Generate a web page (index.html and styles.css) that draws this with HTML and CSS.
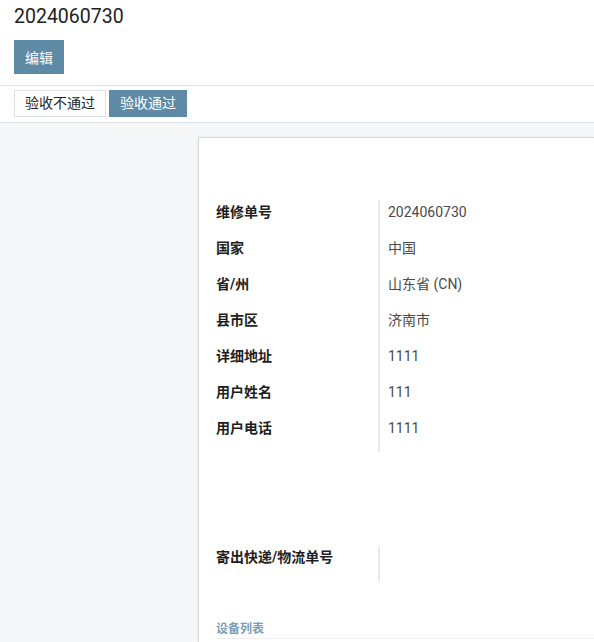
FILE: index.html
```html
<!DOCTYPE html>
<html lang="zh">
<head>
<meta charset="utf-8">
<link rel="stylesheet" href="styles.css">
</head>
<body>
<div class="header">
  <h1 class="title">2024060730</h1>
  <button class="btn btn-primary btn-edit">编辑</button>
</div>
<div class="statusbar">
  <button class="btn btn-light">验收不通过</button>
  <button class="btn btn-primary">验收通过</button>
</div>
<div class="sheet-bg">
  <div class="sheet">
    <div class="group">
      <div class="label">维修单号</div><div class="value">2024060730</div>
      <div class="label">国家</div><div class="value">中国</div>
      <div class="label">省/州</div><div class="value">山东省 (CN)</div>
      <div class="label">县市区</div><div class="value">济南市</div>
      <div class="label">详细地址</div><div class="value">1111</div>
      <div class="label">用户姓名</div><div class="value">111</div>
      <div class="label">用户电话</div><div class="value">1111</div>
    </div>
    <div class="group group-ship">
      <div class="label">寄出快递/物流单号</div><div class="value"></div>
    </div>
    <div class="section-title">设备列表</div>
  </div>
</div>
</body>
</html>
```
FILE: styles.css
```css
* {
  box-sizing: border-box;
}
html, body {
  margin: 0;
  padding: 0;
  background: #fff;
  font-family: Roboto, "Noto Sans CJK SC", sans-serif;
  color: #212529;
  overflow: hidden;
  width: 594px;
  height: 642px;
}
.header {
  padding: 0 14px 11px;
  border-bottom: 1px solid #dfe2e6;
  height: 86px;
}
.title {
  margin: 0;
  font-size: 19.5px;
  font-weight: 400;
  line-height: 34px;
  height: 40px;
  color: #222;
}
.btn {
  font-family: Roboto, "Noto Sans CJK SC", sans-serif;
  font-size: 14px;
  border: 1px solid transparent;
  border-radius: 0;
  cursor: pointer;
  margin: 0;
}
.btn-primary {
  background: #5e8aa6;
  border-color: #5e8aa6;
  color: #fff;
}
.btn-edit {
  height: 34px;
  width: 50px;
  padding: 0;
  display: block;
}
.statusbar {
  display: flex;
  gap: 3px;
  padding: 4px 14px;
  height: 37px;
  border-bottom: 1px solid #dfe2e6;
}
.statusbar .btn {
  height: 27px;
  padding: 0 10px;
  line-height: 25px;
}
.btn-light {
  background: #fff;
  border-color: #dee2e6;
  color: #212529;
}
.sheet-bg {
  background: #f6f7f9;
  padding: 14px 0 0 198px;
  height: 519px;
  overflow: hidden;
}
.sheet {
  background: #fff;
  border: 1px solid #d6d9dd;
  border-right: none;
  border-bottom: none;
  box-shadow: 0 0 3px rgba(0,0,0,0.08);
  width: 100%;
  height: 505px;
  padding: 62px 0 0 17px;
}
.group {
  display: grid;
  grid-template-columns: 162px 1fr;
  grid-auto-rows: 36px;
}
.label {
  font-size: 14px;
  font-weight: 700;
  line-height: 24px;
  color: #1e1e1e;
}
.value {
  font-size: 14px;
  line-height: 24px;
  color: #4a4a4a;
  border-left: 2px solid #e9e9e9;
  padding-left: 8px;
}
.group-ship {
  margin-top: 94px;
}
.group-ship .label {
  line-height: 22px;
}
.section-title {
  margin-top: 39px;
  font-size: 12px;
  font-weight: 700;
  line-height: 17px;
  color: #7b9db6;
  border-bottom: 1px solid #f0f0f0;
  padding-bottom: 0;
}
```
